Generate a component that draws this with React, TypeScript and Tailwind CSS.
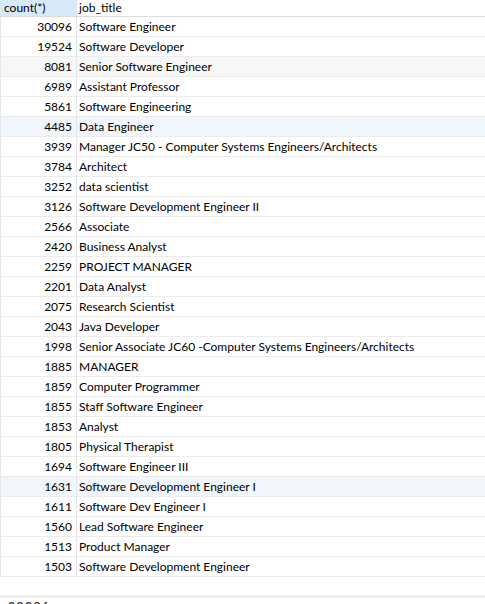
const rows: [number, string][] = [
  [30096, "Software Engineer"],
  [19524, "Software Developer"],
  [8081, "Senior Software Engineer"],
  [6989, "Assistant Professor"],
  [5861, "Software Engineering"],
  [4485, "Data Engineer"],
  [3939, "Manager JC50 - Computer Systems Engineers/Architects"],
  [3784, "Architect"],
  [3252, "data scientist"],
  [3126, "Software Development Engineer II"],
  [2566, "Associate"],
  [2420, "Business Analyst"],
  [2259, "PROJECT MANAGER"],
  [2201, "Data Analyst"],
  [2075, "Research Scientist"],
  [2043, "Java Developer"],
  [1998, "Senior Associate JC60 -Computer Systems Engineers/Architects"],
  [1885, "MANAGER"],
  [1859, "Computer Programmer"],
  [1855, "Staff Software Engineer"],
  [1853, "Analyst"],
  [1805, "Physical Therapist"],
  [1694, "Software Engineer III"],
  [1631, "Software Development Engineer I"],
  [1611, "Software Dev Engineer I"],
  [1560, "Lead Software Engineer"],
  [1513, "Product Manager"],
  [1503, "Software Development Engineer"],
];

function rowBg(i: number) {
  if (i === 2) return "bg-[#f7f7f7]";
  if (i === 5 || i === 23) return "bg-[#f1f6fc]";
  return "bg-white";
}

export default function App() {
  return (
    <div
      className="w-[485px] h-[604px] bg-white overflow-hidden text-[12px] text-black"
      style={{ fontFamily: "Lato, 'Noto Sans', sans-serif" }}
    >
      <div className="flex h-[17px] border-b border-[#dcdcdc] leading-[16px]">
        <div className="w-[77px] shrink-0 bg-[#d8e9f8] pl-[4px] border-r border-[#e6e6e6]">
          count(*)
        </div>
        <div className="pl-[2px] flex-1">job_title</div>
      </div>
      {rows.map(([n, t], i) => (
        <div
          key={i}
          className={`flex h-[20px] border-b border-[#ececec] leading-[20px] ${rowBg(i)}`}
        >
          <div className="w-[77px] shrink-0 text-right pr-[4px] border-r border-l border-[#e6e6e6]">
            {n}
          </div>
          <div className="pl-[2px] flex-1 whitespace-nowrap">{t}</div>
        </div>
      ))}
      <div className="h-[18px]" />
      <div className="h-[3px] bg-[#efefef]" />
      <div className="pl-[8px] pt-[1px] leading-[14px] tracking-[1.5px] font-bold text-[#333]">30096</div>
    </div>
  );
}
